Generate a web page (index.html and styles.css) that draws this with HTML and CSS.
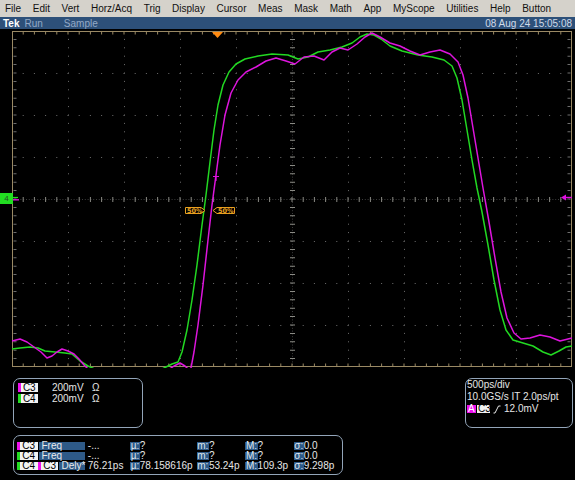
FILE: index.html
```html
<!DOCTYPE html>
<html>
<head>
<meta charset="utf-8">
<title>Tek Scope</title>
<link rel="stylesheet" href="styles.css">
</head>
<body>
<div class="scope">
  <nav class="menubar">
    <span>File</span><span>Edit</span><span>Vert</span><span>Horz/Acq</span><span>Trig</span><span>Display</span><span>Cursor</span><span>Meas</span><span>Mask</span><span>Math</span><span>App</span><span>MyScope</span><span>Utilities</span><span>Help</span><span>Button</span>
  </nav>
  <div class="statusbar">
    <span class="tek">Tek</span><span class="run">Run</span><span class="mode">Sample</span><span class="date">08 Aug 24 15:05:08</span>
  </div>
  <div class="screen">
    <div class="gutter">
      <div class="gnd">4</div>
    </div>
    <svg class="graticule" width="560" height="337" viewBox="12 31 560 337">
      <g stroke="#6e6e6e" stroke-width="1">
        <line x1="68.5" y1="31" x2="68.5" y2="367" stroke-dasharray="1 7.4" stroke-dashoffset="0.5"/>
        <line x1="124.5" y1="31" x2="124.5" y2="367" stroke-dasharray="1 7.4" stroke-dashoffset="0.5"/>
        <line x1="180.5" y1="31" x2="180.5" y2="367" stroke-dasharray="1 7.4" stroke-dashoffset="0.5"/>
        <line x1="236.5" y1="31" x2="236.5" y2="367" stroke-dasharray="1 7.4" stroke-dashoffset="0.5"/>
        <line x1="348.5" y1="31" x2="348.5" y2="367" stroke-dasharray="1 7.4" stroke-dashoffset="0.5"/>
        <line x1="404.5" y1="31" x2="404.5" y2="367" stroke-dasharray="1 7.4" stroke-dashoffset="0.5"/>
        <line x1="460.5" y1="31" x2="460.5" y2="367" stroke-dasharray="1 7.4" stroke-dashoffset="0.5"/>
        <line x1="516.5" y1="31" x2="516.5" y2="367" stroke-dasharray="1 7.4" stroke-dashoffset="0.5"/>
        <line x1="12" y1="73.5" x2="572" y2="73.5" stroke-dasharray="1 10.2" stroke-dashoffset="0.5"/>
        <line x1="12" y1="115.5" x2="572" y2="115.5" stroke-dasharray="1 10.2" stroke-dashoffset="0.5"/>
        <line x1="12" y1="157.5" x2="572" y2="157.5" stroke-dasharray="1 10.2" stroke-dashoffset="0.5"/>
        <line x1="12" y1="241.5" x2="572" y2="241.5" stroke-dasharray="1 10.2" stroke-dashoffset="0.5"/>
        <line x1="12" y1="283.5" x2="572" y2="283.5" stroke-dasharray="1 10.2" stroke-dashoffset="0.5"/>
        <line x1="12" y1="325.5" x2="572" y2="325.5" stroke-dasharray="1 10.2" stroke-dashoffset="0.5"/>
      </g>
      <g stroke="#3c3c3c" stroke-width="1">
        <line x1="12" y1="199.5" x2="572" y2="199.5" stroke-dasharray="1 1.8"/>
        <line x1="292.5" y1="31" x2="292.5" y2="367" stroke-dasharray="1 1.8"/>
      </g>
      <g stroke="#8a8a84">
        <line x1="12" y1="199.5" x2="572" y2="199.5" stroke-width="5" stroke-dasharray="1 10.2" stroke-dashoffset="0.5"/>
        <line x1="292.5" y1="31" x2="292.5" y2="367" stroke-width="5" stroke-dasharray="1 7.4" stroke-dashoffset="0.5"/>
      </g>
      <g stroke="#9a8964">
        <line x1="12" y1="33" x2="572" y2="33" stroke-width="3" stroke-dasharray="1 10.2" stroke-dashoffset="0.5"/>
        <line x1="12" y1="365" x2="572" y2="365" stroke-width="3" stroke-dasharray="1 10.2" stroke-dashoffset="0.5"/>
      </g>
      <g stroke="#6e6e6e">
        <line x1="15" y1="31" x2="15" y2="367" stroke-width="3" stroke-dasharray="1 7.4" stroke-dashoffset="0.5"/>
        <line x1="569" y1="31" x2="569" y2="367" stroke-width="3" stroke-dasharray="1 7.4" stroke-dashoffset="0.5"/>
      </g>
      <rect x="12.5" y="31.5" width="559" height="335" fill="none" stroke="#9a8964" stroke-width="1"/>

      <polyline class="trace c4" points="12,349 20,348 30,347 38,348 45,351 55,352 65,353 72,354 80,361 88,366 97,370 160,370 166,367 172,364 178,362 182,352 187,330 192,300 197,265 202,225 206,195 210,162 214,130 218,105 223,85 229,72 236,64 245,59 258,56 272,54 288,55 298,59 308,57 318,52 330,50 342,47 352,43 360,37 367,34 374,35 381,39 390,46 402,51 418,55 432,57 444,60 452,66 457,78 462,100 467,130 472,160 477,188 482,212 488,245 494,280 500,310 506,330 513,340 523,343 533,346 543,352 551,355 559,351 566,347 572,346"/>
      <polyline class="trace c3" points="12,341 20,339 27,342 34,347 41,352 47,358 52,356 57,352 62,349 68,351 74,354 79,359 84,365 89,370 168,370 174,366 180,363 185,366 189,370 191,368 194,352 198,325 203,285 208,240 212,205 216,175 220,145 225,115 231,93 238,80 246,72 256,67 266,61 276,58 286,61 295,64 304,57 314,56 324,60 332,52 340,48 348,50 357,44 365,37 372,33 380,37 390,43 400,46 410,51 420,55 430,52 440,50 450,54 458,62 463,75 468,98 473,128 478,158 483,188 489,222 495,258 501,292 507,318 514,333 521,339 530,338 540,335 550,337 560,341 572,338"/>

      <polygon points="212,32 223,32 217.5,38" fill="#ff8a10"/>
      <path d="M213,176.5 H219 M216,176.5 V181" stroke="#e010e0" stroke-width="1.2" fill="none"/>
      <path d="M13,197.5 H18" stroke="#22dd22" stroke-width="1.2"/>
      <path d="M13,199.8 H19" stroke="#e010e0" stroke-width="1.4"/>
      <polygon points="561,197.5 566,194.5 566,200.5" fill="#e010e0"/>
      <path d="M565,197.5 H572" stroke="#e010e0" stroke-width="1.4"/>

      <g class="pct">
        <path d="M185.5,207.5 H201 L205,210.5 L201,213.5 H185.5 Z"/>
        <text x="187" y="213">50%</text>
        <path d="M213,210.5 L217,207.5 H234.5 V213.5 H217 Z"/>
        <text x="218" y="213">50%</text>
      </g>
    </svg>
  </div>

  <div class="readouts">
    <div class="box chan-box">
      <div class="chan-row"><span class="bar mag"></span><span class="chip">C3</span><span class="scale">200mV</span><span>Ω</span></div>
      <div class="chan-row"><span class="bar grn"></span><span class="chip">C4</span><span class="scale">200mV</span><span>Ω</span></div>
    </div>
    <div class="box time-box">
      <div>500ps/div</div>
      <div>10.0GS/s IT 2.0ps/pt</div>
      <div class="trig-row"><span class="a-chip">A</span><span class="chip">C3</span><svg class="slope" width="8" height="9" viewBox="0 0 8 9"><path d="M0.5,8 H2 L5.5,1 H7.5" stroke="#e8e8e8" stroke-width="1" fill="none"/></svg><span>12.0mV</span></div>
    </div>
    <div class="box meas-box">
      <div class="meas-grid">
        <div class="src"><span class="bar mag"></span><span class="chip">C3</span><span class="lbl">Freq</span></div>
        <div>-...</div>
        <div><span class="k">µ:</span>?</div>
        <div><span class="k">m:</span>?</div>
        <div><span class="k">M:</span>?</div>
        <div><span class="k">σ:</span>0.0</div>

        <div class="src"><span class="bar grn"></span><span class="chip">C4</span><span class="lbl">Freq</span></div>
        <div>-...</div>
        <div><span class="k">µ:</span>?</div>
        <div><span class="k">m:</span>?</div>
        <div><span class="k">M:</span>?</div>
        <div><span class="k">σ:</span>0.0</div>

        <div class="src"><span class="bar grn"></span><span class="chip">C4</span><span class="bar mag"></span><span class="chip short">C3</span><span class="lbl">Dely*</span></div>
        <div>76.21ps</div>
        <div><span class="k">µ:</span>78.158616p</div>
        <div><span class="k">m:</span>53.24p</div>
        <div><span class="k">M:</span>109.3p</div>
        <div><span class="k">σ:</span>9.298p</div>
      </div>
    </div>
  </div>
</div>
</body>
</html>
```

FILE: styles.css
```css
* { box-sizing: border-box; }

html, body {
  margin: 0;
  padding: 0;
  background: #000;
}

body {
  width: 575px;
  height: 480px;
  overflow: hidden;
  font-family: "Liberation Sans", Arial, sans-serif;
  font-size: 10px;
}

.menubar {
  height: 17px;
  background: #d5d2cb;
  display: flex;
  align-items: center;
  padding-left: 5px;
  gap: 11.6px;
  color: #111;
  font-size: 10px;
}

.statusbar {
  height: 12px;
  background: #2d5079;
  display: flex;
  align-items: center;
  color: #93a9c6;
  font-size: 10px;
}

.tek { font-weight: bold; color: #fff; margin-left: 3px; }
.run { margin-left: 5px; }
.mode { margin-left: 21px; }
.date { margin-left: auto; margin-right: 3px; color: #cfdae8; }

.screen {
  display: flex;
  margin-top: 2px;
  height: 337px;
}

.gutter {
  width: 12px;
  position: relative;
}

.gnd {
  position: absolute;
  left: 0;
  top: 162px;
  width: 13px;
  height: 11px;
  background: #22dd22;
  color: #2a4a2a;
  font-size: 8px;
  line-height: 11px;
  text-align: center;
}

.graticule { display: block; }

.trace {
  fill: none;
  stroke-width: 1.5;
  stroke-linejoin: round;
  stroke-linecap: round;
}
.c4 { stroke: #22d822; }
.c3 { stroke: #dd14dd; }

.pct path { fill: #000; stroke: #e8a020; stroke-width: 1; }
.pct text { fill: #e8a020; font-size: 6.5px; font-weight: bold; font-family: "DejaVu Sans", sans-serif; }

.readouts {
  display: grid;
  grid-template-columns: 130px 1fr 108px;
  grid-template-rows: 50px 40px;
  row-gap: 7px;
  padding: 10px 2px 0 13px;
  color: #e6e6e6;
}

.box {
  border: 1.5px solid #93a5b9;
  border-radius: 7px;
}

.chan-box { padding: 3.5px 0 0 3.5px; }

.chan-row {
  display: flex;
  align-items: center;
  height: 9px;
  line-height: 9px;
  margin-bottom: 2px;
}

.bar { width: 3.4px; height: 9px; flex: none; }
.mag { background: #ee10ee; }
.grn { background: #22dd22; }

.chip {
  background: #f2f2f2;
  color: #000;
  width: 17px;
  height: 9px;
  padding-left: 2px;
  flex: none;
}

.scale { margin-left: 14px; width: 40px; }

.time-box {
  grid-column: 3;
  padding: 0 0 0 1px;
  line-height: 12px;
}

.trig-row {
  display: flex;
  align-items: center;
  height: 12px;
}

.a-chip {
  background: #ee10ee;
  color: #fff;
  width: 9px;
  height: 8px;
  line-height: 8px;
  padding-left: 1px;
}

.trig-row .chip {
  width: 13px;
  height: 8px;
  line-height: 8px;
  margin-left: 1px;
  padding-left: 1px;
}

.slope { margin: 0 3px 0 3px; }

.meas-box {
  grid-column: 1 / 3;
  width: 330px;
  padding: 4.5px 0 0 2.8px;
}

.meas-grid {
  display: grid;
  grid-template-columns: 71px 42.4px 66.6px 48.7px 48.3px auto;
  grid-auto-rows: 10.33px;
  align-items: center;
  line-height: 8px;
  white-space: nowrap;
}

.src { display: flex; align-items: center; height: 8px; }
.src .bar { height: 8px; }
.src .chip { width: 17.6px; height: 8px; line-height: 8px; }
.src .chip.short { width: 16.6px; }

.lbl {
  flex: 1;
  margin: 0 2.6px 0 1.7px;
  height: 8px;
  background: #2e5a88;
  color: #eaeaea;
  padding-left: 2px;
}

.k {
  background: #2e5a88;
  color: #dfe6ee;
  display: inline-block;
  height: 8px;
  padding: 0 0.5px;
}
```
